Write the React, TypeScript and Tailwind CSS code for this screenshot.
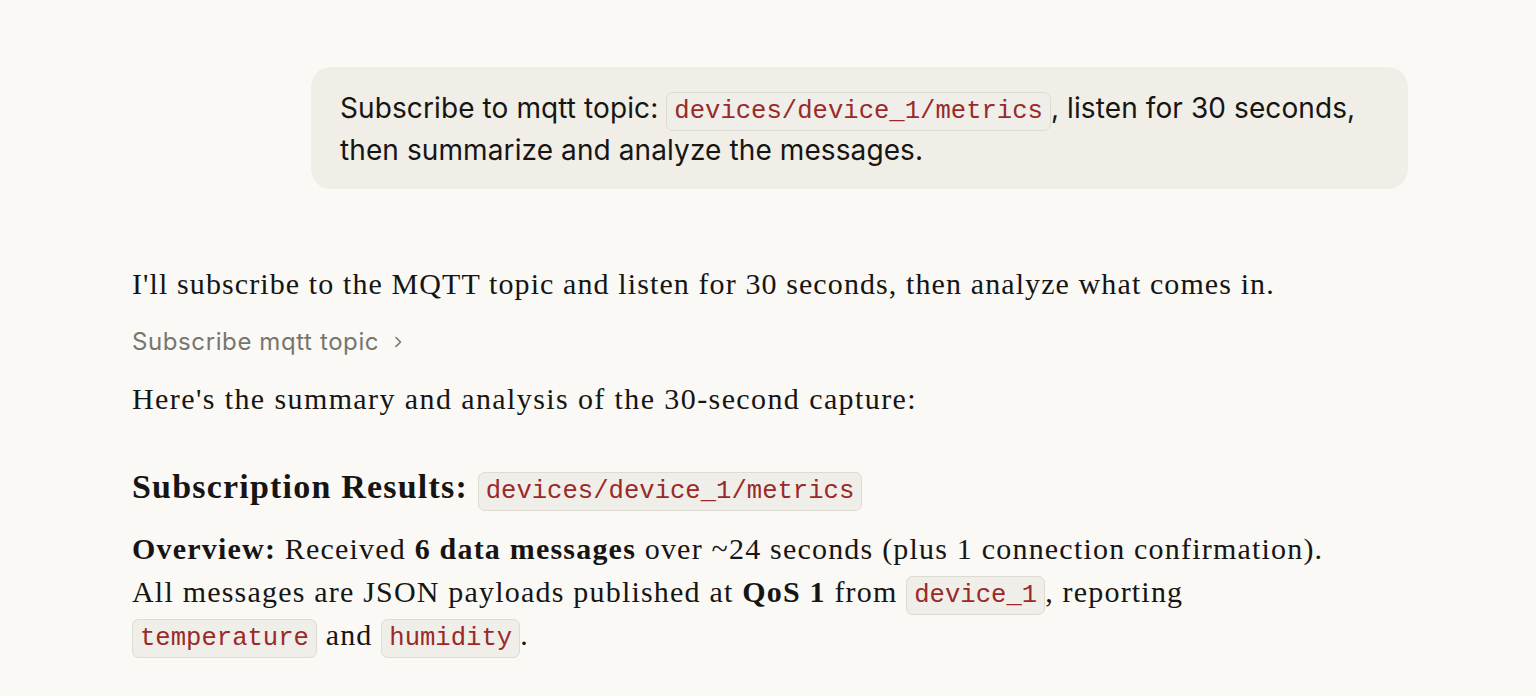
import React from 'react';

const Code: React.FC<{ children: React.ReactNode }> = ({ children }) => (
  <code className="rounded-[7px] border border-[#dedbd3] bg-[#f0eee9] px-[7px] py-[4px] text-[25.6px] leading-none font-normal tracking-normal text-[#9a2a2a] [font-family:'Liberation_Mono',monospace]">
    {children}
  </code>
);

const App: React.FC = () => {
  return (
    <div className="min-h-screen bg-[#faf9f5] text-[#161514]">
      <div className="ml-[132px] w-[1276px] pt-[67px]">
        <div className="flex justify-end">
          <div className="w-[1097px] rounded-[20px] bg-[#f0eee6] pl-[29px] pr-[28px] pt-[20px] pb-[18px] text-[28px] leading-[42px] tracking-[0.1px] [font-family:Inter,sans-serif]">
            Subscribe to mqtt topic: <Code>devices/device_1/metrics</Code>, listen for 30 seconds, then summarize and analyze the messages.
          </div>
        </div>

        <div className="mt-[73px] w-[1215px] text-[30px] leading-[43px] tracking-[1.1px] [font-family:'Liberation_Serif',serif]">
          <p>I'll subscribe to the MQTT topic and listen for 30 seconds, then analyze what comes in.</p>

          <button className="mt-[22px] flex items-center gap-[12px] text-[24px] leading-[30px] tracking-[0.6px] text-[#77756f] [font-family:Inter,sans-serif]">
            Subscribe mqtt topic
            <svg width="14" height="14" viewBox="0 0 14 14" fill="none" stroke="currentColor" strokeWidth="1.6" strokeLinecap="round" strokeLinejoin="round">
              <path d="M5 2.5 9.5 7 5 11.5" />
            </svg>
          </button>

          <p className="mt-[20px] tracking-[1.4px]">Here's the summary and analysis of the 30-second capture:</p>

          <h2 className="mt-[44px] text-[34px] font-bold leading-[46px] tracking-[1.2px]">
            Subscription Results: <Code>devices/device_1/metrics</Code>
          </h2>

          <p className="mt-[17px] tracking-[1.2px]">
            <strong>Overview:</strong> Received <strong>6 data messages</strong> over ~24 seconds (plus 1 connection confirmation).
            All messages are JSON payloads published at <strong>QoS 1</strong> from <Code>device_1</Code>, reporting{' '}
            <Code>temperature</Code> and <Code>humidity</Code>.
          </p>
        </div>
      </div>
    </div>
  );
};

export default App;
